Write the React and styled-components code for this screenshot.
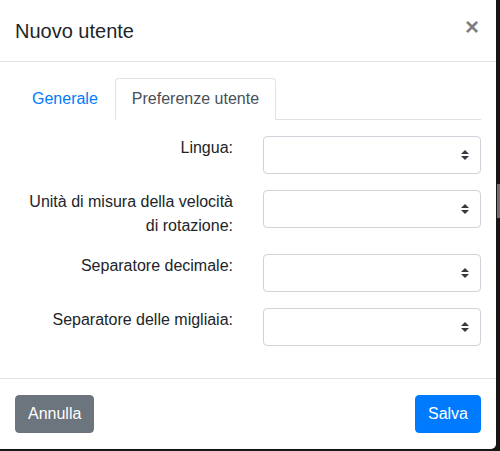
import React from "react";
import styled, { createGlobalStyle } from "styled-components";

const GlobalStyle = createGlobalStyle`
  html, body {
    margin: 0;
    padding: 0;
    background: #161616;
    overflow: hidden;
  }
  * {
    box-sizing: border-box;
  }
`;

const rows = [
  { id: 1, label: "Lingua:" },
  { id: 2, label: "Unità di misura della velocità di rotazione:" },
  { id: 3, label: "Separatore decimale:" },
  { id: 4, label: "Separatore delle migliaia:" },
];

const SortArrows = () => (
  <svg width="8" height="10" viewBox="0 0 4 5">
    <path d="M2 0L0 2h4zm0 5L0 3h4z" fill="#343a40" />
  </svg>
);

const App = () => {
  return (
    <>
      <GlobalStyle />
      <Screen>
        <Modal>
          <Header>
            <Title>Nuovo utente</Title>
            <Close>×</Close>
          </Header>
          <Body>
            <Tabs>
              <TabLink>Generale</TabLink>
              <TabLink active>Preferenze utente</TabLink>
            </Tabs>
            <TabPane>
              {rows.map((r) => (
                <FormRow key={r.id}>
                  <Label>{r.label}</Label>
                  <SelectBox>
                    <SortArrows />
                  </SelectBox>
                </FormRow>
              ))}
            </TabPane>
          </Body>
          <Footer>
            <Button variant="secondary">Annulla</Button>
            <Button variant="primary">Salva</Button>
          </Footer>
        </Modal>
        <Track>
          <Thumb />
        </Track>
      </Screen>
    </>
  );
};

export default App;

const Screen = styled.div`
  display: flex;
  width: 500px;
  height: 451px;
  font-family: "Liberation Sans", Arial, sans-serif;
  color: #212529;
`;

const Modal = styled.div`
  width: 496px;
  height: 449px;
  background: #fff;
  border-bottom-right-radius: 5px;
  display: flex;
  flex-direction: column;
`;

const Header = styled.div`
  height: 62px;
  padding: 16px 15px 0 15px;
  border-bottom: 1px solid #dee2e6;
  display: flex;
  justify-content: space-between;
  align-items: flex-start;
`;

const Title = styled.h5`
  margin: 0;
  font-size: 20px;
  font-weight: 400;
  line-height: 30px;
`;

const Close = styled.button`
  border: none;
  background: transparent;
  padding: 0 2px 0 0;
  margin-top: 0;
  font-family: "Liberation Sans", Arial, sans-serif;
  font-size: 24px;
  font-weight: 700;
  line-height: 22px;
  color: #000;
  opacity: 0.5;
`;

const Body = styled.div`
  padding: 16px 15px;
`;

const Tabs = styled.div`
  display: flex;
  border-bottom: 1px solid #dee2e6;
`;

const TabLink = styled.div`
  margin-bottom: -1px;
  padding: 8px 16px;
  font-size: 16px;
  line-height: 24px;
  border: 1px solid transparent;
  border-top-left-radius: 4px;
  border-top-right-radius: 4px;
  color: ${(p) => (p.active ? "#495057" : "#007bff")};
  background: #fff;
  border-color: ${(p) => (p.active ? "#dee2e6 #dee2e6 #fff" : "transparent")};
`;

const TabPane = styled.div`
  padding-top: 16px;
`;

const FormRow = styled.div`
  display: grid;
  grid-template-columns: 1fr 1fr;
  column-gap: 30px;
  margin-bottom: 16px;
`;

const Label = styled.label`
  font-size: 16px;
  line-height: 24px;
  text-align: right;
`;

const SelectBox = styled.div`
  height: 38px;
  border: 1px solid #ced4da;
  border-radius: 4px;
  background: #fff;
  display: flex;
  align-items: center;
  justify-content: flex-end;
  padding-right: 11px;
`;

const Footer = styled.div`
  margin-top: auto;
  border-top: 1px solid #dee2e6;
  padding: 16px 15px;
  display: flex;
  justify-content: space-between;
  align-items: center;
`;

const Button = styled.button`
  border: 1px solid transparent;
  border-radius: 4px;
  padding: 6px 12px;
  font-family: "Liberation Sans", Arial, sans-serif;
  font-size: 16px;
  line-height: 24px;
  color: #fff;
  background: ${(p) => (p.variant === "primary" ? "#007bff" : "#6c757d")};
  border-color: ${(p) => (p.variant === "primary" ? "#007bff" : "#6c757d")};
`;

const Track = styled.div`
  flex: 1;
  display: flex;
  flex-direction: column;
  padding-top: 184px;
`;

const Thumb = styled.div`
  height: 34px;
  margin-left: 1px;
  background: #6e6e6e;
`;
